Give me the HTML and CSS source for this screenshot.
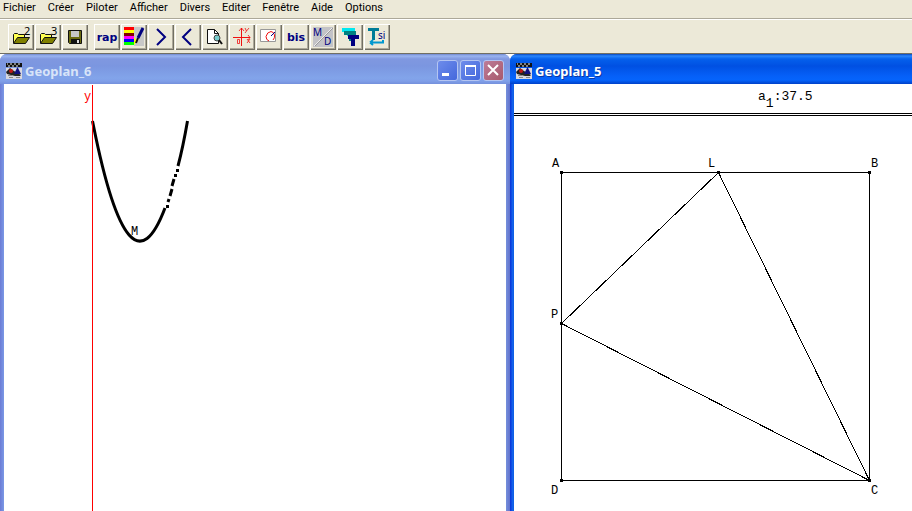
FILE: index.html
```html
<!DOCTYPE html>
<html lang="fr">
<head>
<meta charset="utf-8">
<title>Geoplan</title>
<link rel="stylesheet" href="styles.css">
</head>
<body>
<svg class="defs" aria-hidden="true">
  <symbol id="folder" viewBox="0 0 26 26">
    <path d="M5.500 19V10.500L6.500 9.500H9.500L10.500 10.500H16.500V13.500" fill="#ffff50" stroke="#111" />
    <path d="M5.500 19.500L9.500 13.500H21.500L17.500 19.500Z" fill="#808000" stroke="#111" />
  </symbol>
  <symbol id="app" viewBox="0 0 16 16">
    <path d="M0 5H16V16H0Z" fill="#d8d8e0"/>
    <path d="M0 0H16V4H0Z" fill="#111"/>
    <path d="M1 1h1M4 1h2M8 1h2M12 1h2M2 3h2M6 3h2M10 3h2" stroke="#eee"/>
    <path d="M0 9L4 5L8 8L15 12L14 13H9L1 11Z" fill="#222"/>
    <circle cx="5" cy="8" r="2" fill="#c01818"/>
    <path d="M11.500 4L15 11H8Z" fill="#101080"/>
    <path d="M2 12.500H6M3 14.500H7M10 14.500H14" stroke="#888"/>
  </symbol>
</svg>
<nav class="menu">
  <a href="#">Fichier</a><a href="#">Créer</a><a href="#">Piloter</a><a href="#">Afficher</a><a href="#">Divers</a><a href="#">Editer</a><a href="#">Fenêtre</a><a href="#">Aide</a><a href="#">Options</a>
</nav>
<div class="toolbar">
  <div class="group">
    <button type="button" aria-label="Ouvrir 2"><svg><use href="#folder"/><text class="digit" x="16" y="11">2</text></svg></button>
    <button type="button" aria-label="Ouvrir 3"><svg><use href="#folder"/><text class="digit" x="16" y="11">3</text></svg></button>
    <button type="button" aria-label="Enregistrer"><svg>
      <path d="M6.500 6.500H19.500V19.500H7.500L6.500 18.500Z" fill="#6b6b10" stroke="#111"/>
      <path d="M9 7H17V13H9Z" fill="#c8c8c8"/><path d="M9 15H18V19H9Z" fill="#111"/><path d="M15 16H17V19H15Z" fill="#ddd"/>
    </svg></button>
  </div>
  <div class="group">
    <button type="button" class="word">rap</button>
    <button type="button" aria-label="Styles"><svg>
      <path d="M13 3H23V22H13Z" fill="#c8c8c8"/>
      <path d="M3 3H13V6H3Z" fill="#f00"/><path d="M3 6H13V9H3Z" fill="#ff0"/><path d="M3 9H13V12H3Z" fill="#800000"/><path d="M3 12H13V15H3Z" fill="#f0f"/><path d="M3 15H13V18H3Z" fill="#00f"/><path d="M3 18H13V21H3Z" fill="#0f0"/>
      <path d="M13 13L16 17L13 21Z" fill="#ff0"/>
      <path d="M22 4L17 14" stroke="#000080" stroke-width="3"/><path d="M17 14L15 19" stroke="#111" stroke-width="2"/>
    </svg></button>
    <button type="button" aria-label="Suivant"><svg><path d="M9 5L17 13L9 21" class="chevron"/></svg></button>
    <button type="button" aria-label="Précédent"><svg><path d="M16 5L8 13L16 21" class="chevron"/></svg></button>
    <button type="button" aria-label="Aperçu"><svg>
      <path d="M5.500 5.500H12.500L16.500 9.500V19.500H5.500Z" fill="#fff" stroke="#111"/><path d="M12.500 5.500V9.500H16.500" fill="none" stroke="#111"/>
      <circle cx="15" cy="14" r="3" fill="#7cc" stroke="#444"/><path d="M17 16L20 20" stroke="#111" stroke-width="2"/>
    </svg></button>
    <button type="button" aria-label="Repère"><svg>
      <path d="M4 13.500H21M12.500 4V22" class="red"/>
      <path d="M10 7L12.500 4L15 7M19 11L21 13.500L19 16M16 4L17.500 7L20 4M17.500 7L16 9M18 15L21 19M21 15L18 19M8.500 15.500H10.500V19.500H8.500Z" class="red thin"/>
    </svg></button>
    <button type="button" aria-label="Cadre"><svg>
      <path d="M4.500 5.500H19.500V17.500H4.500Z" fill="#fff" stroke="#999"/>
      <path d="M13 17Q10 16 10 12.500Q11 8 15 7.500Q18 8 18.500 11Q19 14 17 16" class="red"/><path d="M15 12L19 8" stroke="#008" />
    </svg></button>
    <button type="button" class="word">bis</button>
    <button type="button" aria-label="M D"><svg>
      <path d="M3 3H23V23H3Z" fill="#c3c3c7"/><path d="M4 22L22 4" stroke="#eee"/><path d="M5 22L23 4" stroke="#999"/>
      <text class="letter" x="3" y="12">M</text><text class="letter" x="14" y="21">D</text>
    </svg></button>
    <button type="button" aria-label="Textes"><svg>
      <path d="M5 4H18V8H13V12H10V8H5Z" fill="#00e8f0"/><path d="M7 7H19V11H15V17H12V11H7Z" fill="#008080"/><path d="M11 11H22V15H18V22H14V15H11Z" fill="#000080"/>
    </svg></button>
    <button type="button" aria-label="T si"><svg>
      <path d="M4 4H15V7H11V16H8V7H4Z" fill="#007c98"/><text class="letter" x="14" y="15">si</text>
      <path d="M6 18.500H19V16M6 18.500L9 16M6 18.500L9 21" fill="none" stroke="#0098d0" stroke-width="2"/>
    </svg></button>
  </div>
</div>
<main class="workspace">
  <section class="window inactive">
    <header class="titlebar">
      <svg class="app-icon"><use href="#app"/></svg>
      <h2>Geoplan_6</h2>
      <div class="controls">
        <button type="button" aria-label="Réduire"><svg><path d="M5 14.500H12" stroke="#fff" stroke-width="3"/></svg></button>
        <button type="button" aria-label="Agrandir"><svg><path d="M5.500 5.500H15.500V15.500H5.500Z" fill="none" stroke="#fff"/><path d="M5 6H16" stroke="#fff" stroke-width="2"/></svg></button>
        <button type="button" class="close" aria-label="Fermer"><svg><path d="M5 5L15 15M15 5L5 15" stroke="#fff" stroke-width="2"/></svg></button>
      </div>
    </header>
    <div class="content">
      <svg class="plane" role="img" aria-label="Courbe décrite par M">
        <g transform="translate(-4 -84)">
          <path d="M92.500 121L93.500 126Q129 303 165 208M178 166Q183 147 187.500 121" class="trace"/>
          <path d="M176 169h3v3h-3ZM174 174h3v3h-3ZM166 205h3v3h-3Z"/>
          <path d="M172 186L174 179M170 196L172 189M168 202L169 199" class="trace"/>
          <path d="M92.500 85V2000" stroke="#f00"/>
          <text x="84" y="100" class="axis">y</text>
          <text x="131" y="235">M</text>
        </g>
      </svg>
    </div>
  </section>
  <section class="window">
    <header class="titlebar">
      <svg class="app-icon"><use href="#app"/></svg>
      <h2>Geoplan_5</h2>
    </header>
    <div class="content">
      <div class="readout">a<sub>1</sub>:37.5</div>
      <svg class="plane" role="img" aria-label="Carré ABCD et triangle LPC">
        <g transform="translate(-514 -116)">
          <path d="M561.500 172.500H869.500V480.500H561.500ZM718.500 172.500L561.500 323.500L869.500 480.500Z" class="figure"/>
          <path d="M560 171h3v3h-3ZM717 171h3v3h-3ZM868 171h3v3h-3ZM560 322h3v3h-3ZM560 479h3v3h-3ZM868 479h3v3h-3Z"/>
          <text x="552" y="167">A</text><text x="708" y="167">L</text><text x="871" y="167">B</text>
          <text x="551" y="318">P</text><text x="551" y="494">D</text><text x="871" y="494">C</text>
        </g>
      </svg>
    </div>
  </section>
</main>
</body>
</html>
```
FILE: styles.css
```css
* { box-sizing: border-box; }
body {
  margin: 0;
  height: 100vh;
  display: flex;
  flex-direction: column;
  overflow: hidden;
  background: #ece9d8;
  font: 11px Roboto, sans-serif;
}
.defs { display: none; }
svg { display: block; }
.menu {
  display: flex;
  gap: 12px;
  height: 19px;
  padding-left: 3px;
  line-height: 15px;
  border-bottom: 1px solid #aca899;
}
.menu a { color: #000; text-decoration: none; }
.toolbar {
  display: flex;
  gap: 6px;
  height: 35px;
  padding: 4px 8px;
  border-top: 1px solid #fff;
  border-bottom: 1px solid #716f64;
}
.group { display: flex; gap: 1px; }
.toolbar button {
  width: 26px;
  height: 26px;
  padding: 0;
  border: 0;
  background: #ece9d8;
  box-shadow: inset 1px 1px #fff, inset -1px -1px #716f64, inset -2px -2px #aca899;
}
.toolbar svg { width: 26px; height: 26px; }
.toolbar .word { color: #000080; font: bold 11px "DejaVu Sans", sans-serif; }
.digit { font: 11px "Noto Sans", sans-serif; }
.letter { font: 10px "Noto Sans", sans-serif; fill: #000080; }
.chevron { fill: none; stroke: #000080; stroke-width: 2; }
.red { fill: none; stroke: #f01010; }
.thin { stroke-opacity: 0.8; }
.workspace {
  flex: 1;
  min-height: 0;
  display: grid;
  grid-template-columns: 510fr 402fr;
  background: #fff;
}
.window {
  min-width: 0;
  display: flex;
  flex-direction: column;
  padding: 0 4px;
  overflow: hidden;
  border-radius: 7px 7px 0 0;
  background: linear-gradient(90deg, #0831d9, #166aee 3px, #0855dd 4px);
}
.window:last-child { padding-right: 0; border-top-right-radius: 0; }
.window.inactive { background: linear-gradient(90deg, #6b7bd5, #7b99e6 4px, #7590dc calc(100% - 4px), #6272cc); }
.titlebar {
  flex: none;
  display: flex;
  align-items: center;
  gap: 3px;
  height: 30px;
  margin: 0 -4px;
  padding: 3px 6px 0;
  color: #fff;
  background: linear-gradient(#0848c0, #2a86fc 2px, #0560ec 5px, #0050e2 12px, #0560f8 22px, #0564fc 26px, #0040c8);
}
.inactive .titlebar {
  color: #d8e4f8;
  background: linear-gradient(#7088d0, #9ab4f0 2px, #8098e0 5px, #7b96e0 12px, #82a4ea 24px, #809fe8 27px, #7490dc);
}
.app-icon { width: 16px; height: 16px; }
h2 { margin: 0; font: bold 13px "Noto Sans", sans-serif; text-shadow: 1px 1px #0838a0; }
.inactive h2 { text-shadow: none; }
.controls { display: flex; gap: 2px; margin-left: auto; }
.controls button {
  width: 21px;
  height: 21px;
  padding: 0;
  border: 1px solid #b4c5f2;
  border-radius: 3px;
  background: linear-gradient(135deg, #6e8ceb, #4468dc);
}
.controls .close { background: linear-gradient(135deg, #bd7c98, #a8596c); }
.controls svg { width: 21px; height: 21px; margin: -1px; }
.content { flex: 1; min-height: 0; display: flex; flex-direction: column; background: #fff; }
.plane { flex: 1; width: 100%; min-height: 0; }
.plane text, .readout { font: 12px "Liberation Mono", monospace; }
.plane .axis { fill: #f00; }
.trace { fill: none; stroke: #000; stroke-width: 3; }
.figure { fill: none; stroke: #000; shape-rendering: crispEdges; }
.readout {
  height: 32px;
  padding: 5px 0 0 244px;
  font-size: 13px;
  border-bottom: 3px double #000;
}
.readout sub { font-size: 13px; line-height: 0; vertical-align: -7px; }
```
